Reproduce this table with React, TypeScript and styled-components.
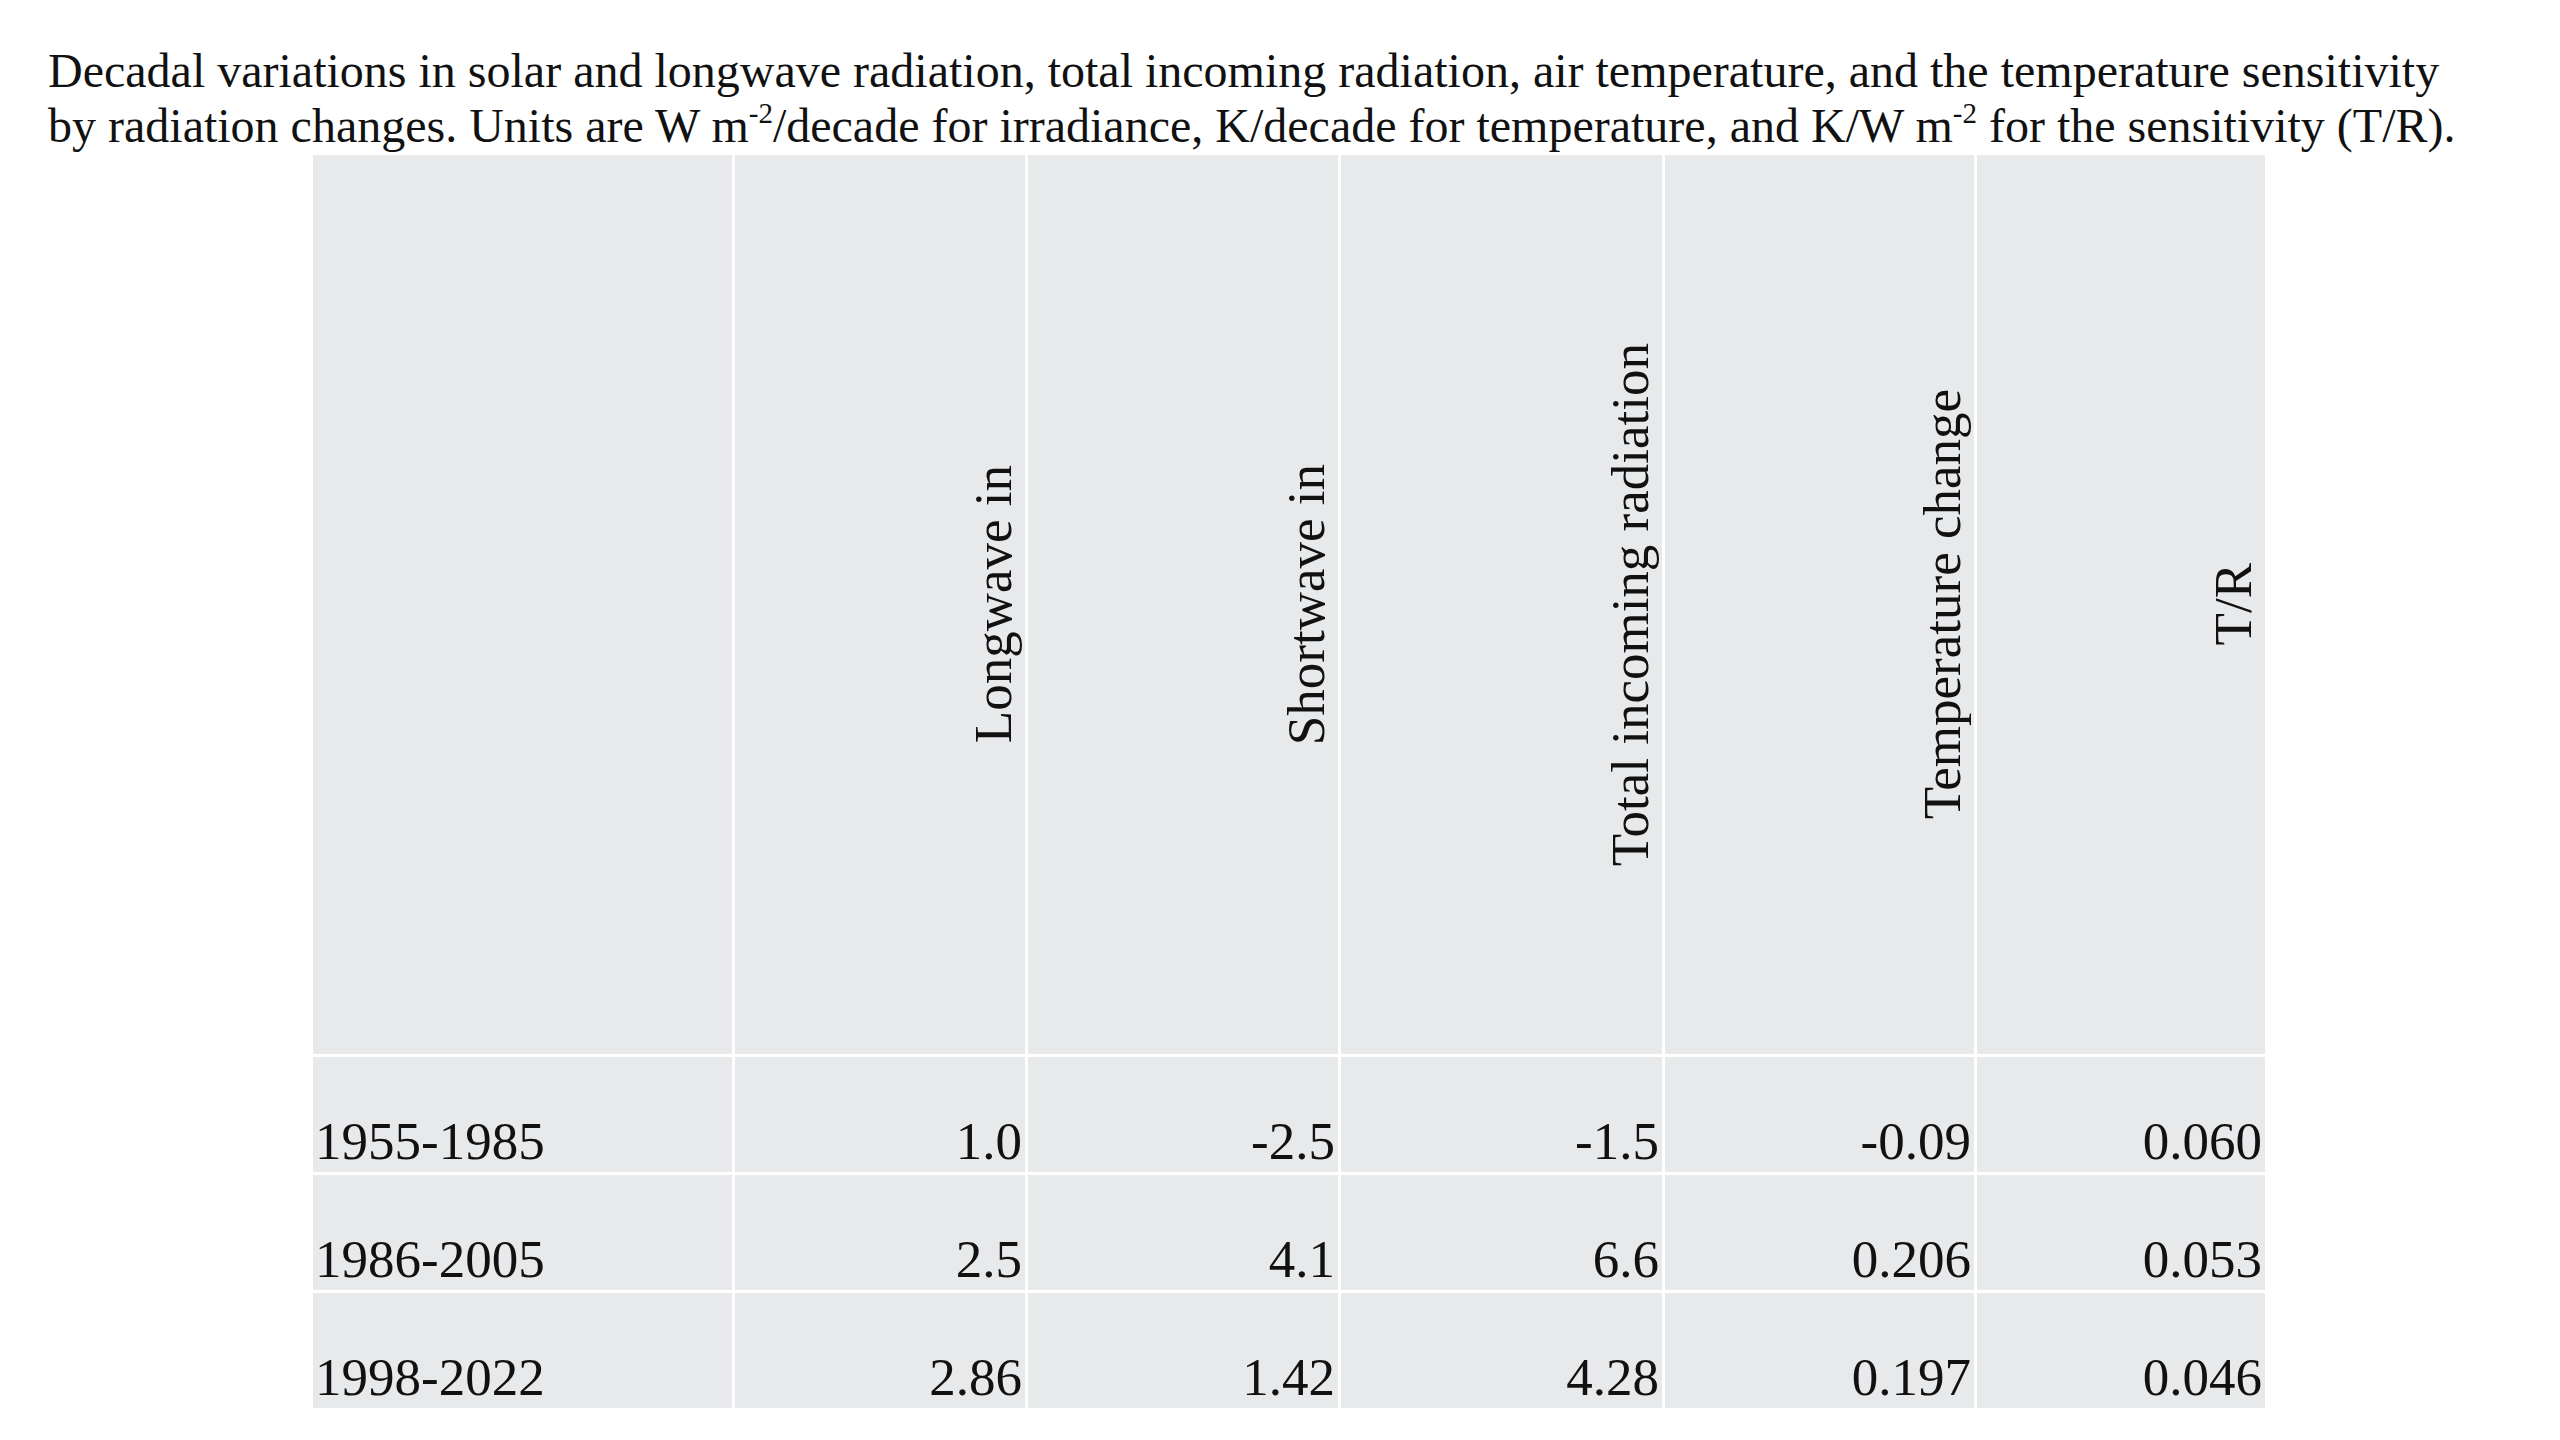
import React from "react";
import styled, { createGlobalStyle } from "styled-components";

type Row = {
  period: string;
  values: string[];
};

const headers = [
  "Longwave in",
  "Shortwave in",
  "Total incoming radiation",
  "Temperature change",
  "T/R",
];

const rows: Row[] = [
  { period: "1955-1985", values: ["1.0", "-2.5", "-1.5", "-0.09", "0.060"] },
  { period: "1986-2005", values: ["2.5", "4.1", "6.6", "0.206", "0.053"] },
  { period: "1998-2022", values: ["2.86", "1.42", "4.28", "0.197", "0.046"] },
];

const GlobalStyle = createGlobalStyle`
  html, body {
    margin: 0;
    padding: 0;
    background: #ffffff;
  }
  body {
    font-family: "Liberation Serif", "Times New Roman", serif;
    color: #111111;
  }
`;

const Page = styled.div`
  padding: 43px 0 0 48px;
  width: 2560px;
  height: 1440px;
  box-sizing: border-box;
`;

const Caption = styled.p`
  margin: 0;
  font-size: 48px;
  line-height: 55px;
  white-space: nowrap;

  sup {
    font-size: 29px;
    line-height: 0;
    vertical-align: 19px;
  }
`;

const Grid = styled.div`
  margin: 2px 0 0 265px;
  display: grid;
  grid-template-columns: 419px 290px 310px 321px 309px 288px;
  grid-template-rows: 899px 115px 115px 115px;
  gap: 3px;
  width: max-content;
  background: #ffffff;
`;

const Cell = styled.div<{ $align?: "left" | "right" }>`
  background: #e8e9eb;
  display: flex;
  align-items: flex-end;
  justify-content: ${(p) => (p.$align === "left" ? "flex-start" : "flex-end")};
  padding: 0 3px 2px ${(p) => (p.$align === "left" ? "2px" : "0")};
  font-size: 53px;
  line-height: 1.1;
  box-sizing: border-box;
`;

const HeadCell = styled.div`
  background: #e8e9eb;
  display: flex;
  align-items: center;
  justify-content: flex-end;
  padding-right: 2px;
  box-sizing: border-box;
`;

const HeadLabel = styled.span`
  writing-mode: vertical-rl;
  transform: rotate(180deg);
  font-size: 53px;
  line-height: 1.12;
  white-space: nowrap;
`;

export default function App() {
  return (
    <Page>
      <GlobalStyle />
      <Caption>
        Decadal variations in solar and longwave radiation, total incoming
        radiation, air temperature, and the temperature sensitivity
        <br />
        by radiation changes. Units are W m<sup>-2</sup>/decade for irradiance,
        K/decade for temperature, and K/W m<sup>-2</sup> for the sensitivity
        (T/R).
      </Caption>
      <Grid>
        <HeadCell />
        {headers.map((h) => (
          <HeadCell key={h}>
            <HeadLabel>{h}</HeadLabel>
          </HeadCell>
        ))}
        {rows.map((r) => (
          <React.Fragment key={r.period}>
            <Cell $align="left">{r.period}</Cell>
            {r.values.map((v, i) => (
              <Cell key={i}>{v}</Cell>
            ))}
          </React.Fragment>
        ))}
      </Grid>
    </Page>
  );
}
